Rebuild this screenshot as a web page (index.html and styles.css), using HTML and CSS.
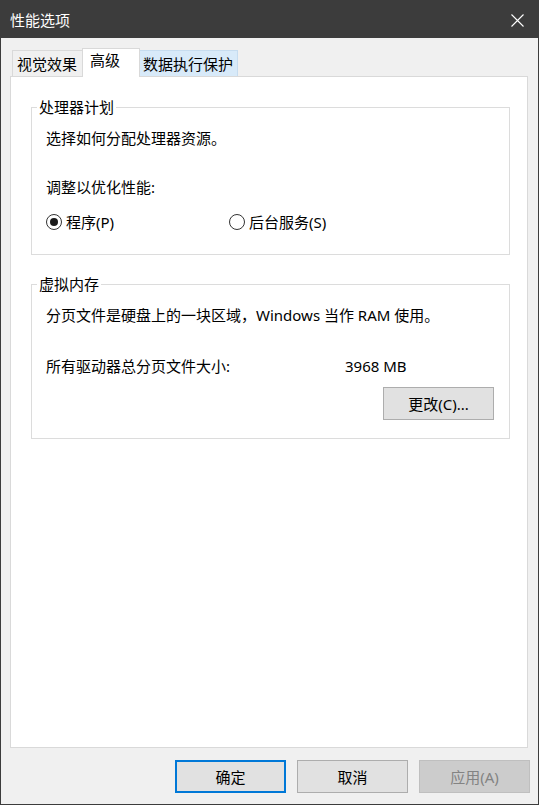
FILE: index.html
```html
<!DOCTYPE html>
<html lang="zh-CN">
<head>
<meta charset="utf-8">
<title>性能选项</title>
<link rel="stylesheet" href="styles.css">
</head>
<body>
<div class="window">
  <div class="titlebar">
    <span class="title">性能选项</span>
    <svg class="close" width="13" height="13" viewBox="0 0 13 13"><path d="M0.5 0.5 L12.5 12.5 M12.5 0.5 L0.5 12.5" stroke="#fff" stroke-width="1.1" fill="none"/></svg>
  </div>
  <div class="body">
    <div class="tabs">
      <div class="tab tab-first">视觉效果</div>
      <div class="tab tab-active">高级</div>
      <div class="tab tab-hover">数据执行保护</div>
    </div>
    <div class="panel">
      <div class="group group-cpu">
        <div class="group-title">处理器计划</div>
        <div class="line first">选择如何分配处理器资源。</div>
        <div class="line adjust">调整以优化性能:</div>
        <div class="radios">
          <div class="radio radio-first">
            <svg width="16" height="16" viewBox="0 0 16 16"><circle cx="8" cy="8" r="7.5" fill="#fff" stroke="#333" stroke-width="1"/><circle cx="8" cy="8" r="4" fill="#1a1a1a"/></svg>
            <span>程序(P)</span>
          </div>
          <div class="radio">
            <svg width="16" height="16" viewBox="0 0 16 16"><circle cx="8" cy="8" r="7.5" fill="#fff" stroke="#333" stroke-width="1"/></svg>
            <span>后台服务(S)</span>
          </div>
        </div>
      </div>
      <div class="group group-mem">
        <div class="group-title">虚拟内存</div>
        <div class="line first">分页文件是硬盘上的一块区域，Windows 当作 RAM 使用。</div>
        <div class="line total"><span class="label">所有驱动器总分页文件大小:</span><span>3968 MB</span></div>
        <div class="change-row"><button class="btn">更改(C)...</button></div>
      </div>
    </div>
    <div class="buttons">
      <button class="btn btn-default">确定</button>
      <button class="btn">取消</button>
      <button class="btn btn-disabled">应用(A)</button>
    </div>
  </div>
</div>
</body>
</html>
```
FILE: styles.css
```css
* { box-sizing: border-box; }
html, body { margin: 0; padding: 0; background: #f0f0f0; }
body {
  font-family: "Noto Sans", "Noto Sans CJK SC", sans-serif;
  font-size: 15px;
  line-height: 20px;
  color: #000;
}
.window {
  width: 539px;
  height: 805px;
  border: 1px solid #3c3c3c;
  background: #f0f0f0;
  display: flex;
  flex-direction: column;
}
.titlebar {
  height: 37px;
  background: #3c3c3c;
  display: flex;
  align-items: center;
  justify-content: space-between;
  padding: 0 14px 0 9px;
  color: #fff;
}
.title { line-height: 37px; padding-top: 1px; }
.close { display: block; margin-top: 1px; }
.body {
  flex: 1;
  display: flex;
  flex-direction: column;
  padding: 10px 10px 11px 9px;
}
.tabs {
  display: flex;
  align-items: flex-end;
  height: 28px;
  margin-left: 2px;
}
.tab {
  height: 26px;
  border: 1px solid #d9d9d9;
  border-bottom: none;
  background: #f0f0f0;
  padding: 3px 5px 2px 4px;
  white-space: nowrap;
}
.tab-active {
  position: relative;
  z-index: 1;
  height: 29px;
  margin: 0 -1px -1px -1px;
  background: #fff;
  padding: 1px 19px 0 7px;
}
.tab-hover {
  background: #d8eaf9;
  border-color: #c6dcef;
  padding: 3px 4px 2px 3px;
}
.panel {
  height: 672px;
  background: #fff;
  border: 1px solid #d9d9d9;
  padding: 30px 17px 0 20px;
}
.group {
  border: 1px solid #dcdcdc;
  padding: 0 15px 22px 14px;
}
.group-mem { margin-top: 29px; padding-bottom: 18px; }
.group-title {
  width: fit-content;
  margin: -11px 0 0 -9px;
  padding: 0 2px;
  background: #fff;
}
.line.first { margin-top: 11px; }
.adjust { margin-top: 29px; }
.radios {
  display: flex;
  margin-top: 15px;
}
.radio {
  display: flex;
  align-items: center;
  gap: 4px;
}
.radio svg { display: block; }
.radio-first { width: 183px; }
.total { margin-top: 31px; display: flex; }
.total .label { width: 299px; }
.change-row {
  display: flex;
  justify-content: flex-end;
  margin-top: 11px;
}
.btn {
  font: inherit;
  color: #000;
  width: 111px;
  height: 33px;
  background: #e1e1e1;
  border: 1px solid #adadad;
  padding: 0;
  margin: 0;
}
.buttons {
  display: flex;
  justify-content: flex-end;
  gap: 11px;
  margin-top: 12px;
  margin-right: -2px;
}
.btn-default { border: 2px solid #0078d7; }
.btn-disabled {
  background: #cccccc;
  border-color: #bfbfbf;
  color: #838383;
}
```
